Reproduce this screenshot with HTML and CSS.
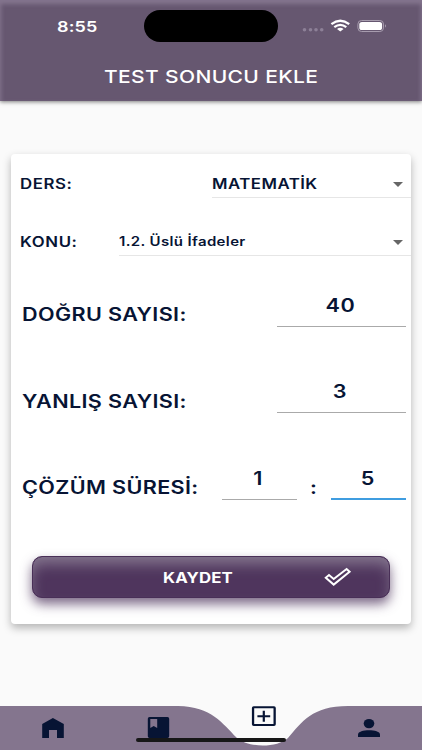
FILE: index.html
```html
<!DOCTYPE html>
<html lang="tr">
<head>
    <meta charset="UTF-8">
    <meta name="viewport" content="width=device-width, initial-scale=1.0">
    <title>Test Sonucu Ekle</title>
    <link rel="stylesheet" href="styles.css">
</head>
<body>
    <header class="header">
        <div class="status-bar">
            <div class="clock"><span class="wide">8:55</span></div>
            <div class="island"></div>
            <svg class="status-icons" width="90" height="16" viewBox="0 0 90 16">
                <g fill="#8d8097">
                    <circle cx="5.5" cy="11.8" r="1.8"/>
                    <circle cx="11.5" cy="11.8" r="1.8"/>
                    <circle cx="17" cy="11.8" r="1.8"/>
                    <circle cx="22.7" cy="11.8" r="1.8"/>
                </g>
                <g fill="none" stroke="#fff" stroke-width="2.3">
                    <path d="M32.4 6.2Q41.3 -.6 50.2 6.2"/>
                    <path d="M35.3 9.2Q41.3 4.6 47.3 9.2"/>
                </g>
                <path d="M38 11Q41.3 8.3 44.6 11L41.3 13.6Z" fill="#fff"/>
                <rect x="58.9" y="2.5" width="25.6" height="11" rx="3.6" fill="none" stroke="#a79cae"/>
                <rect x="60.3" y="3.9" width="22.8" height="8.2" rx="2.6" fill="#fff"/>
                <path d="M86 6.3Q88 8 86 9.7Z" fill="#a79cae"/>
            </svg>
        </div>
        <h1 class="title"><span class="wide">TEST SONUCU EKLE</span></h1>
    </header>

    <main class="card">
        <div class="select-row">
            <label class="select-label"><span class="wide">DERS:</span></label>
            <div class="select lesson">
                <span class="wide">MATEMATİK</span>
                <i class="arrow"></i>
            </div>
        </div>
        <div class="select-row">
            <label class="select-label"><span class="wide">KONU:</span></label>
            <div class="select topic">
                <span class="wide">1.2. Üslü İfadeler</span>
                <i class="arrow"></i>
            </div>
        </div>

        <div class="field-row">
            <label class="field-label"><span class="wide">DOĞRU SAYISI:</span></label>
            <div class="field"><span class="wide">40</span></div>
        </div>
        <div class="field-row">
            <label class="field-label"><span class="wide">YANLIŞ SAYISI:</span></label>
            <div class="field"><span class="wide">3</span></div>
        </div>
        <div class="field-row">
            <label class="field-label"><span class="wide">ÇÖZÜM SÜRESİ:</span></label>
            <div class="time">
                <div class="field short"><span class="wide">1</span></div>
                <span class="colon wide">:</span>
                <div class="field short active"><span class="wide">5</span></div>
            </div>
        </div>

        <button class="save">
            <span class="save-text"><span class="wide">KAYDET</span></span>
            <svg class="check" width="28" height="20" viewBox="0 0 28 20">
                <path d="M1.8 10.8L5 8L9.7 12L22.6 2L25.6 4.8L9.7 17.6Z" fill="none" stroke="#fff" stroke-width="2"/>
            </svg>
        </button>
    </main>

    <nav class="nav">
        <svg width="422" height="52" viewBox="0 0 422 52">
            <path class="nav-shape" d="M0 8H178C212 9 222 25 237 40C249 50 277 50 288 40C302 24 312 8 348 8H422V52H0Z"/>
            <g class="nav-icon">
                <path d="M42.2 26L52.9 20L63.8 26V40H57V32H49V40H42.2Z"/>
                <path fill-rule="evenodd" d="M149.5 19H167.5Q169.2 19 169.2 20.7V38.3Q169.2 40 167.5 40H149.5Q147.8 40 147.8 38.3V20.7Q147.8 19 149.5 19ZM150.3 21V30L153.7 28L157.2 30V21Z"/>
                <path fill-rule="evenodd" d="M253.7 8.2H274Q275.8 8.2 275.8 10V26.2Q275.8 28 274 28H253.7Q251.9 28 251.9 26.2V10Q251.9 8.2 253.7 8.2ZM254.2 10.2V26H273.5V10.2ZM262.7 12.8H264.9V17.2H270.2V19.2H264.9V23.8H262.7V19.2H257.4V17.2H262.7Z"/>
                <ellipse cx="369" cy="25.6" rx="5.3" ry="4.7"/>
                <path d="M358 39V36.5C358 30.9 380 30.9 380 36.5V39Z"/>
            </g>
        </svg>
        <div class="home-indicator"></div>
    </nav>
</body>
</html>
```
FILE: styles.css
```css
* {
    box-sizing: border-box;
}
body {
    margin: 0;
    height: 750px;
    display: flex;
    flex-direction: column;
    overflow: hidden;
    background-color: #fafafa;
    color: #071434;
    font-family: Inter, 'Liberation Sans', sans-serif;
    font-weight: 600;
}
.wide {
    display: inline-block;
    transform: scaleX(1.2);
    transform-origin: left center;
    white-space: nowrap;
}

/* header */
.header {
    flex: none;
    height: 101px;
    color: #fff;
    background-color: #665770;
    box-shadow: inset 0 3px 4px 1px #84758e, 0 1px 4px rgba(0, 0, 0, 0.5);
}
.status-bar {
    display: flex;
    height: 52px;
    padding-top: 10px;
}
.clock {
    width: 144px;
    padding-left: 57px;
    font-size: 15px;
    line-height: 33px;
    letter-spacing: 0.1px;
}
.island {
    width: 134px;
    height: 32px;
    border-radius: 16px;
    background-color: #000;
}
.status-icons {
    margin: 8px 0 0 21px;
}
.title {
    margin: 0;
    padding-left: 104px;
    font-size: 17.5px;
    line-height: 50px;
    font-weight: 500;
    letter-spacing: 0.3px;
}

/* form card */
.card {
    flex: none;
    width: 400px;
    height: 470px;
    margin: 53px 0 0 11px;
    border-radius: 4px;
    background-color: #fff;
    box-shadow: 0 4px 8px rgba(0, 0, 0, 0.28);
}
.select-row {
    display: flex;
    justify-content: space-between;
    height: 58.5px;
    padding-left: 9px;
    font-size: 14px;
    line-height: 29px;
}
.select-row:first-child {
    padding-top: 15px;
    height: 73px;
}
.select-label {
    letter-spacing: 0.5px;
}
.select {
    display: flex;
    justify-content: space-between;
    height: 29px;
    border-bottom: 1px solid #e6e6e6;
}
.lesson {
    width: 199px;
    letter-spacing: 0.4px;
}
.topic {
    width: 292px;
    font-size: 12.5px;
    letter-spacing: 0.3px;
}
.arrow {
    width: 10px;
    height: 5px;
    margin: 13px 8px 0 0;
    background-color: #666;
    clip-path: polygon(0 0, 100% 0, 50% 100%);
}
.field-row {
    display: flex;
    justify-content: space-between;
    height: 86.5px;
    padding: 0 5px 0 11px;
    font-size: 18px;
}
.field-label {
    padding-top: 18.5px;
    line-height: 22px;
    letter-spacing: 0.3px;
}
.field {
    width: 129px;
    height: 41px;
    padding-top: 9px;
    border-bottom: 1px solid #aaa;
    line-height: 22px;
    letter-spacing: 0.6px;
    text-align: center;
}
.field .wide {
    margin-left: -2px;
    transform-origin: center;
}
.time {
    display: flex;
    width: 184px;
    justify-content: space-between;
}
.short {
    width: 75px;
}
.colon {
    margin-left: -2px;
    padding-top: 18px;
    line-height: 22px;
}
.active {
    border-bottom: 2px solid #3f9de0;
}

/* save button */
.save {
    display: flex;
    align-items: center;
    width: 358px;
    height: 42px;
    margin: 11px 0 0 21px;
    padding: 0;
    border: 1px solid #492f57;
    border-radius: 10px;
    color: #fff;
    background-color: #4f355d;
    box-shadow: inset 0 9px 14px -2px #84758e, 0 6px 12px rgba(79, 53, 93, 0.75);
    font: inherit;
    font-size: 14px;
}
.save-text {
    width: 161px;
    margin-left: 130px;
    text-align: left;
    font-weight: 700;
    letter-spacing: 0.1px;
}

/* bottom navigation */
.nav {
    position: relative;
    flex: none;
    height: 52px;
    margin-top: auto;
}
.nav svg {
    display: block;
}
.nav-shape {
    fill: #84758e;
}
.nav-icon {
    fill: #071434;
}
.home-indicator {
    position: absolute;
    left: 136px;
    top: 40px;
    width: 150px;
    height: 4px;
    border-radius: 2px;
    background-color: #171717;
}
```
